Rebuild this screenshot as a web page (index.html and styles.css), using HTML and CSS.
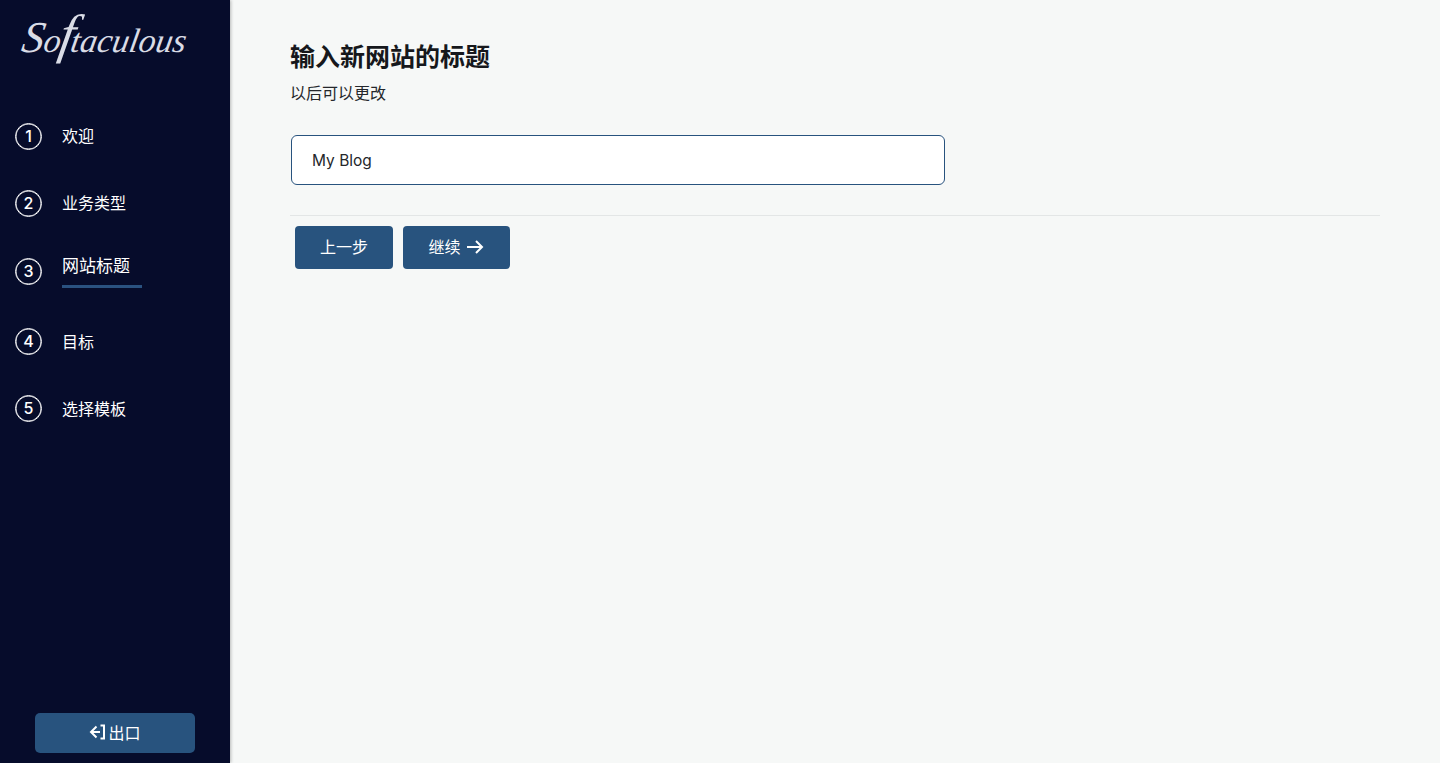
FILE: index.html
```html
<!DOCTYPE html>
<html lang="zh-CN">
<head>
    <meta charset="UTF-8">
    <meta name="viewport" content="width=device-width, initial-scale=1.0">
    <title>输入新网站的标题</title>
    <link rel="stylesheet" href="styles.css">
</head>
<body>
    <aside class="sidebar">
        <div class="logo"><span class="logo-text"><span class="logo-s">S</span>o<span class="logo-f">f</span>taculous</span></div>
        <ul class="steps">
            <li class="step step-1"><span class="num">1</span><span class="label">欢迎</span></li>
            <li class="step step-2"><span class="num">2</span><span class="label">业务类型</span></li>
            <li class="step step-3 active"><span class="num">3</span><span class="label">网站标题</span></li>
            <li class="step step-4"><span class="num">4</span><span class="label">目标</span></li>
            <li class="step step-5"><span class="num">5</span><span class="label">选择模板</span></li>
        </ul>
        <button class="exit-btn">
            <svg class="exit-icon" width="17" height="16" viewBox="0 0 17 16" fill="none" stroke="#fff" stroke-width="2">
                <path d="M7.5 2.5 L2 8 L7.5 13.5 M2 8 H11 M11.5 1.5 H15 V14.5 H11.5"/>
            </svg>出口
        </button>
    </aside>

    <main class="content">
        <h1>输入新网站的标题</h1>
        <p class="sub">以后可以更改</p>
        <input class="title-input" type="text" value="My Blog">
        <hr class="divider">
        <div class="actions">
            <button class="btn btn-prev">上一步</button>
            <button class="btn btn-next">继续
                <svg class="arrow" width="18" height="16" viewBox="0 0 18 16" fill="none" stroke="#fff" stroke-width="2">
                    <path d="M1 8 H16 M10 2 L16 8 L10 14"/>
                </svg>
            </button>
        </div>
    </main>
</body>
</html>
```

FILE: styles.css
```css
* {
    box-sizing: border-box;
}
html, body {
    height: 100%;
}
body {
    margin: 0;
    display: flex;
    height: 763px;
    overflow: hidden;
    background-color: #f6f8f7;
    color: #16181c;
    font-family: "Inter", "Noto Sans CJK SC", sans-serif;
}
.sidebar {
    width: 230px;
    flex-shrink: 0;
    display: flex;
    flex-direction: column;
    background-color: #060c2b;
    box-shadow: 1px 0 3px rgba(0, 0, 0, 0.25);
    color: #fff;
}
.logo {
    height: 108px;
    padding: 17px 0 0 18px;
    font-family: "Liberation Serif", serif;
    font-style: italic;
    font-size: 34px;
    line-height: 48px;
    color: #d9dce6;
    white-space: nowrap;
}
.logo-text {
    display: inline-block;
    height: 48px;
    transform: skewX(-10deg);
    transform-origin: left bottom;
}
.logo-s {
    font-size: 44px;
    line-height: 0;
}
.logo-f {
    font-size: 54px;
    line-height: 0;
    margin: 0 -3px 0 -2px;
}
.steps {
    list-style: none;
    margin: 0;
    padding: 0;
    flex: 1;
}
.step {
    display: flex;
    align-items: center;
    height: 56px;
    margin-bottom: 11px;
    padding-left: 15px;
    font-size: 16px;
}
.num {
    width: 27px;
    height: 27px;
    border: 1px solid #fff;
    box-shadow: inset 0 0 0 0.5px #fff;
    border-radius: 50%;
    display: flex;
    align-items: center;
    justify-content: center;
    font-size: 16px;
    font-weight: 500;
    margin-right: 20px;
}
.label {
    line-height: 24px;
}
.step-2 {
    margin-bottom: 12px;
}
.step-4 .label,
.step-5 .label {
    margin-top: 2px;
}
.step.active {
    margin-bottom: 14px;
}
.step.active .label {
    width: 80px;
    height: 34px;
    font-size: 17px;
    border-bottom: 3px solid #2a5280;
}
.exit-btn {
    width: 160px;
    height: 40px;
    margin: 0 0 10px 35px;
    padding-bottom: 3px;
    display: flex;
    align-items: center;
    justify-content: center;
    background-color: #28537e;
    border: none;
    border-radius: 5px;
    color: #fff;
    font-family: inherit;
    font-size: 16px;
}
.exit-icon {
    margin-right: 2px;
}
.content {
    flex: 1;
    padding: 41px 60px 0;
}
h1 {
    margin: 0;
    font-size: 25px;
    line-height: 32px;
    font-weight: 700;
}
.sub {
    margin: 8px 0 0;
    font-size: 16px;
    line-height: 24px;
    color: #24272b;
}
.title-input {
    display: block;
    width: 654px;
    height: 50px;
    margin: 30px 0 0 1px;
    padding: 0 20px;
    background-color: #fff;
    border: 1px solid #28537e;
    border-radius: 6px;
    color: #24272b;
    font-family: inherit;
    font-size: 15.5px;
}
.divider {
    margin: 30px 0 10px;
    border: none;
    border-top: 1px solid #e3e6e6;
}
.actions {
    display: flex;
    gap: 10px;
    padding-left: 5px;
}
.btn {
    height: 43px;
    padding: 0 0 3px;
    display: flex;
    align-items: center;
    justify-content: center;
    gap: 5px;
    background-color: #28537e;
    border: none;
    border-radius: 4px;
    color: #fff;
    font-family: inherit;
    font-size: 16px;
}
.btn-prev {
    width: 98px;
}
.btn-next {
    width: 107px;
    padding-right: 1px;
}
.arrow {
    margin-top: 2px;
}
```
